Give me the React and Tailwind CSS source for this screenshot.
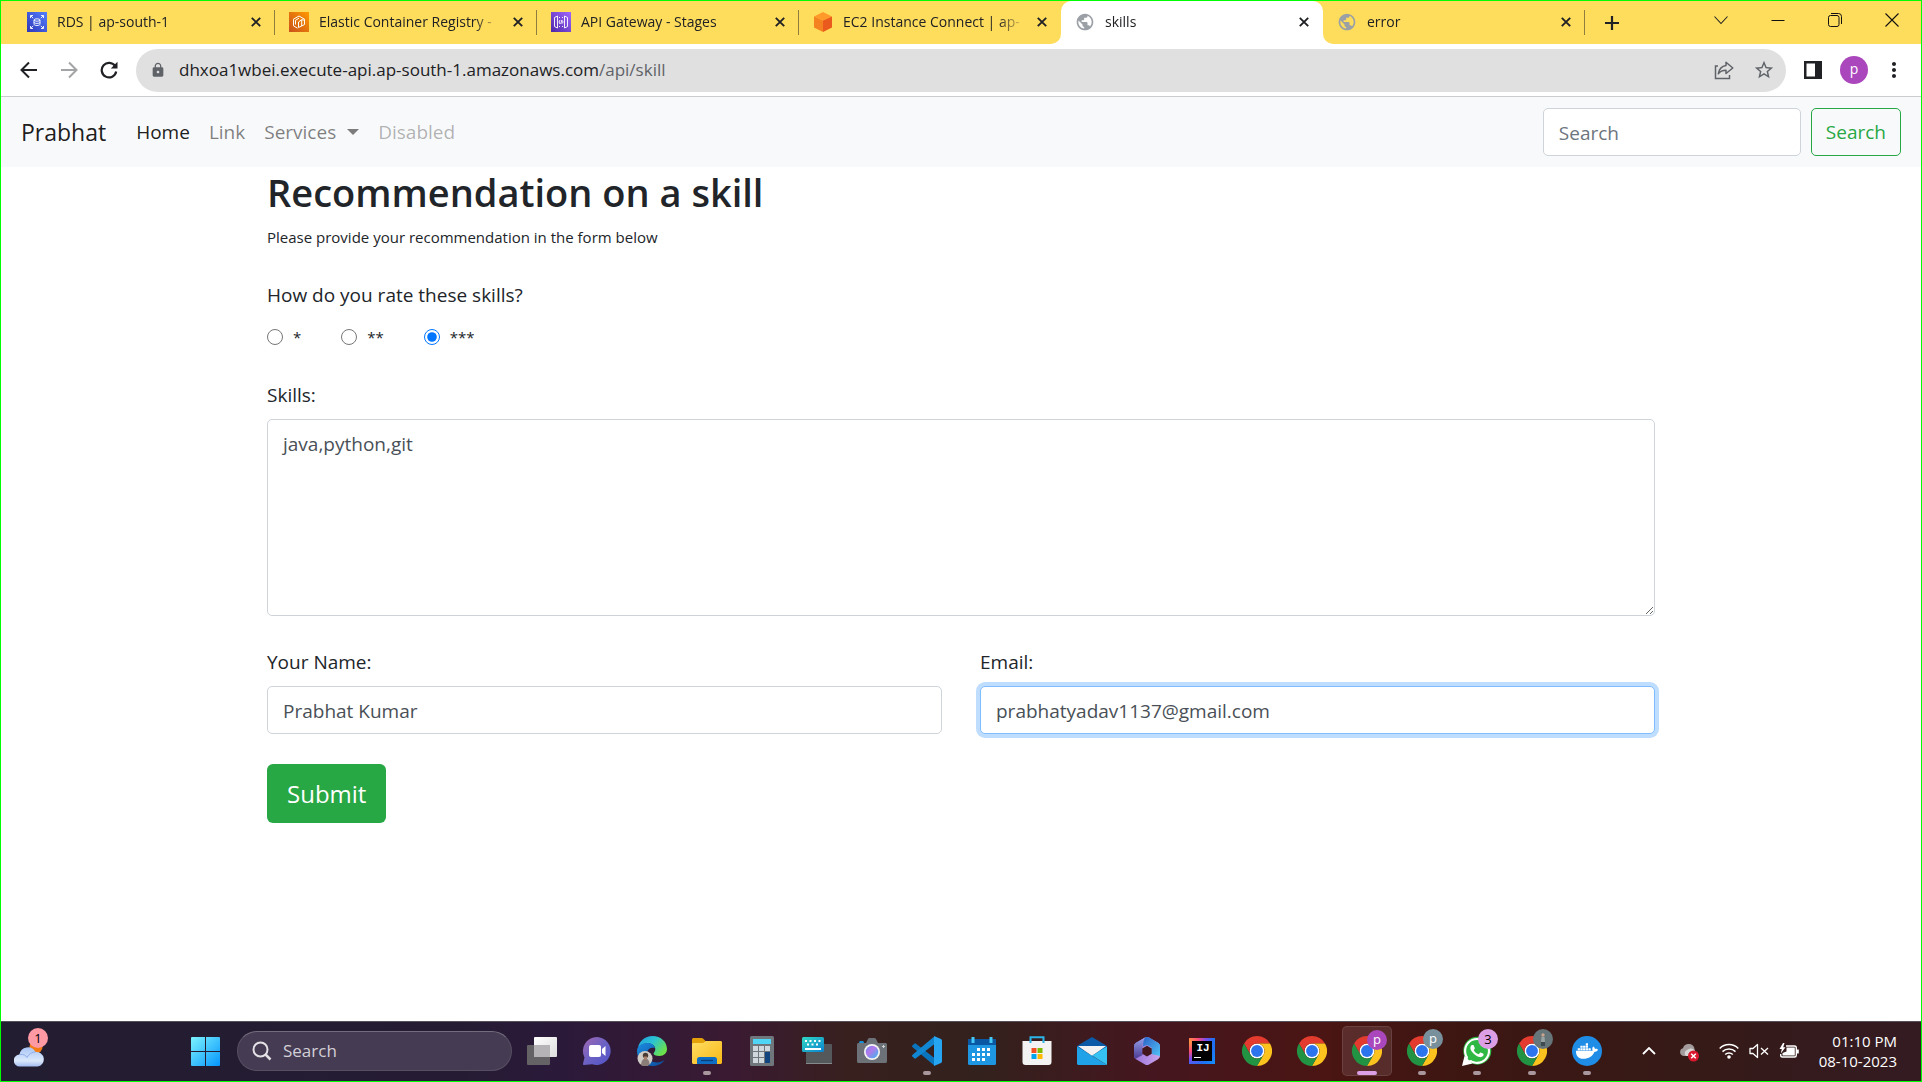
import React from "react";
import { FaDocker, FaWhatsapp } from "react-icons/fa";
import { MdLock, MdStarBorder, MdMoreVert, MdPublic } from "react-icons/md";

/* ---------- browser tab icons ---------- */

function RdsIcon() {
  return (
    <svg viewBox="0 0 20 20" className="size-5">
      <defs>
        <linearGradient id="rds" x1="0" y1="1" x2="1" y2="0">
          <stop offset="0" stopColor="#2e37b8" />
          <stop offset="1" stopColor="#527fff" />
        </linearGradient>
      </defs>
      <rect width="20" height="20" fill="url(#rds)" />
      <g fill="none" stroke="#fff" strokeWidth="0.9">
        <path d="M3.5 6V3.5H6M14 3.5h2.5V6M16.5 14v2.5H14M6 16.5H3.5V14M3.8 3.8l2.4 2.4M16.2 3.8l-2.4 2.4M3.8 16.2l2.4-2.4M16.2 16.2l-2.4-2.4" />
        <ellipse cx="10" cy="8" rx="3" ry="1.2" />
        <path d="M7 8v4.2c0 .7 1.300 1.300 3 1.300s3-.6 3-1.300V8M7 10.200c0 .7 1.300 1.200 3 1.200s3-.5 3-1.200" />
      </g>
    </svg>
  );
}

function EcrIcon() {
  return (
    <svg viewBox="0 0 20 20" className="size-5">
      <defs>
        <linearGradient id="ecr" x1="0" y1="1" x2="1" y2="0">
          <stop offset="0" stopColor="#c8511b" />
          <stop offset="1" stopColor="#ff9900" />
        </linearGradient>
      </defs>
      <rect width="20" height="20" fill="url(#ecr)" />
      <g fill="none" stroke="#fff" strokeWidth="1" strokeLinejoin="round">
        <path d="M8.500 16.200 4.500 13.800V7.200L10 4l5.500 3.200v1.500" />
        <path d="M9.500 15.500V10l3.200-2.300v6.300zM12.700 14l2.800-1.500V8.200l-2.800-.5M6.500 12.500V8.300L10 6.200" />
      </g>
    </svg>
  );
}

function GatewayIcon() {
  return (
    <svg viewBox="0 0 20 20" className="size-5">
      <defs>
        <linearGradient id="gateway" x1="0" y1="1" x2="1" y2="0">
          <stop offset="0" stopColor="#4d27a8" />
          <stop offset="1" stopColor="#a166ff" />
        </linearGradient>
      </defs>
      <rect width="20" height="20" fill="url(#gateway)" />
      <g fill="none" stroke="#fff" strokeWidth="0.9">
        <path d="M6.500 4 3.500 5.500v9l3 1.500zM13.500 4l3 1.500v9l-3 1.500zM8 5.500h1M11 5.500h1M8 14.500h1M11 14.500h1" />
        <path d="m9 8-1 2 1 2M10.800 8l-1 4M11.300 8.500l.8 1.500-.8 1.500" />
      </g>
    </svg>
  );
}

function CubeIcon() {
  return (
    <svg viewBox="0 0 20 20" className="size-5">
      <path d="M10 0 1 4.500 10 8.500l9-4z" fill="#ff9a2a" />
      <path d="M1 4.500v11l9 4.500V8.500z" fill="#f58220" />
      <path d="M19 4.500v11L10 20V8.500z" fill="#ea5a1c" />
    </svg>
  );
}

function Globe() {
  return <MdPublic className="size-5 text-[#9aa0a6]" />;
}

function CloseX() {
  return (
    <svg viewBox="0 0 10 10" className="size-2.5">
      <path d="m.8.800 8.400 8.400M9.200.800.8 9.200" stroke="#202124" strokeWidth="1.900" />
    </svg>
  );
}

const tabs = [
  { title: "RDS | ap-south-1", Icon: RdsIcon },
  { title: "Elastic Container Registry -", Icon: EcrIcon },
  { title: "API Gateway - Stages", Icon: GatewayIcon },
  { title: "EC2 Instance Connect | ap-", Icon: CubeIcon, last: true },
  { title: "skills", Icon: Globe, active: true },
  { title: "error", Icon: Globe },
];

function Tab({ title, Icon, active, last }) {
  return (
    <div
      className={
        "relative flex h-full min-w-0 basis-[262px] items-center pb-[2px] pl-[14px] pr-[14px] " +
        (active ? "rounded-t-[10px] bg-white" : "")
      }
    >
      <span className="shrink-0">
        <Icon />
      </span>
      <button
        type="button"
        className="ml-[10px] min-w-0 flex-1 overflow-hidden text-left text-[14px] leading-5 whitespace-nowrap text-[#202124] [mask-image:linear-gradient(to_right,black_85%,transparent)]"
      >
        {title}
      </button>
      <button type="button" aria-label={"Close " + title} className="ml-3 shrink-0">
        <CloseX />
      </button>
      {!active && !last && <span className="absolute top-[9px] right-0 h-[25px] w-px bg-[#8f7d3f]" />}
      {active && (
        <>
          <span className="absolute bottom-0 -left-[10px] size-[10px] bg-white">
            <span className="block size-full rounded-br-[10px] bg-[#ffdd5c]" />
          </span>
          <span className="absolute -right-[10px] bottom-0 size-[10px] bg-white">
            <span className="block size-full rounded-bl-[10px] bg-[#ffdd5c]" />
          </span>
        </>
      )}
    </div>
  );
}

function TabStrip() {
  return (
    <div className="flex h-[43px] items-center bg-[#ffdd5c] pr-px pl-3">
      <div className="flex h-full min-w-0 flex-1 items-center">
        {tabs.map((t) => (
          <Tab key={t.title} {...t} />
        ))}
        <button type="button" aria-label="New tab" className="ml-[19px] shrink-0">
          <svg viewBox="0 0 16 16" className="size-4">
            <path d="M8 1v14M1 8h14" stroke="#202124" strokeWidth="2.200" />
          </svg>
        </button>
      </div>
      <div className="flex shrink-0 pb-[6px]">
        <button type="button" aria-label="Search tabs" className="grid w-[57px] place-items-center">
          <svg viewBox="0 0 14 14" className="size-3.5">
            <path d="m.5 3.500 6.500 7 6.500-7" fill="none" stroke="#202124" strokeWidth="1.100" />
          </svg>
        </button>
        <button type="button" aria-label="Minimize" className="grid w-[57px] place-items-center">
          <svg viewBox="0 0 14 14" className="size-3.5">
            <path d="M.5 7.500h13" stroke="#111" />
          </svg>
        </button>
        <button type="button" aria-label="Restore" className="grid w-[57px] place-items-center">
          <svg viewBox="0 0 14 14" className="size-3.5" fill="none" stroke="#111">
            <rect x=".5" y="2.500" width="10.500" height="11" rx="2" />
            <path d="M3 .500h7.500a3 3 0 0 1 3 3V11" />
          </svg>
        </button>
        <button type="button" aria-label="Close window" className="grid w-[57px] place-items-center">
          <svg viewBox="0 0 14 14" className="size-3.5">
            <path d="m.5.500 13 13M13.500.500l-13 13" stroke="#111" strokeWidth="1.100" />
          </svg>
        </button>
      </div>
    </div>
  );
}

function Toolbar() {
  return (
    <div className="flex h-[53px] items-center border-b border-[#cbcccf] bg-white pr-[15px] pl-4">
      <button type="button" aria-label="Back" className="mr-4 grid size-6 place-items-center">
        <svg viewBox="0 0 18 18" className="size-[18px]" fill="none" stroke="#202124" strokeWidth="2">
          <path d="M17 9H2M9 1.500 1.500 9 9 16.500" />
        </svg>
      </button>
      <button type="button" aria-label="Forward" className="mr-4 grid size-6 place-items-center">
        <svg viewBox="0 0 18 18" className="size-[18px]" fill="none" stroke="#a3a4a6" strokeWidth="2">
          <path d="M1 9h15M9 1.500 16.500 9 9 16.500" />
        </svg>
      </button>
      <button type="button" aria-label="Reload" className="mr-[15px] grid size-6 place-items-center">
        <svg viewBox="0 0 18 18" className="size-[18px]" fill="none" stroke="#202124" strokeWidth="2.200">
          <path d="M15.200 5.200A7.300 7.300 0 1 0 16.200 10.500" />
          <path d="M17.500.800V7.500h-6.700z" fill="#202124" stroke="none" />
        </svg>
      </button>
      <div className="flex h-[43px] min-w-0 flex-1 items-center rounded-full bg-[#e0e0e0] pr-[11px] pl-[14px]">
        <MdLock className="size-4 shrink-0 text-[#5f6368]" />
        <div className="ml-[13px] min-w-0 flex-1 truncate text-[17px] leading-6 text-[#202124]">
          dhxoa1wbei.execute-api.ap-south-1.amazonaws.com<span className="text-[#5f6368]">/api/skill</span>
        </div>
        <button type="button" aria-label="Share" className="mr-[19px]">
          <svg viewBox="0 0 20 20" className="size-5" fill="none" stroke="#5f6368" strokeWidth="1.500">
            <path d="M4 6H1.500v12.500h14V15" />
            <path d="M12 2.200 18.800 8 12 13.500v-3.300c-3.500 0-5.800 1-7.700 3.600C5 9.500 7.500 6.200 12 5.500z" strokeLinejoin="round" />
          </svg>
        </button>
        <button type="button" aria-label="Bookmark">
          <MdStarBorder className="size-[22px] text-[#5f6368]" />
        </button>
      </div>
      <button type="button" aria-label="Side panel" className="ml-[18px]">
        <svg viewBox="0 0 18 18" className="size-[18px]">
          <path d="M0 0h18v18H0zM2.500 2.500v13h8.500v-13z" fillRule="evenodd" fill="#202124" />
        </svg>
      </button>
      <button
        type="button"
        className="ml-[18px] grid size-7 place-items-center rounded-full bg-[#ab47bc] pb-[2px] text-[14px] leading-5 text-white"
      >
        p
      </button>
      <button type="button" aria-label="Menu" className="ml-[14px]">
        <MdMoreVert className="size-6 text-[#202124]" />
      </button>
    </div>
  );
}

/* ---------- web page ---------- */

function Navbar() {
  return (
    <nav className="flex h-[70px] items-center bg-[#f8f9fa] px-5 text-[19px] leading-7 whitespace-nowrap">
      <a href="#" className="text-[23px] leading-9 text-black/90">Prabhat</a>
      <div className="ml-[30px] flex flex-1 items-center gap-[19px]">
        <a href="#" className="text-black/90">Home</a>
        <a href="#" className="text-black/50">Link</a>
        <a href="#" className="flex items-center text-black/50">
          Services
          <svg viewBox="0 0 12 6" className="ml-[11px] h-[6px] w-3">
            <path d="M0 0h12L6 6z" fill="currentColor" />
          </svg>
        </a>
        <span className="text-black/30">Disabled</span>
      </div>
      <input
        type="search"
        placeholder="Search"
        aria-label="Search"
        className="h-12 w-[258px] rounded-[5px] border border-[#ced4da] bg-white px-[15px] pt-[2px] text-[#495057] placeholder:text-[#6c757d]"
      />
      <button type="button" className="ml-[10px] h-12 rounded-[5px] border border-[#28a745] px-[14px] text-[#28a745]">
        Search
      </button>
    </nav>
  );
}

const field = "w-full rounded-[5px] border bg-white px-[15px] text-[#495057] outline-none ";

function SkillForm() {
  return (
    <main className="mx-auto w-full max-w-[1388px] text-[19px] leading-[30px] text-[#212529]">
      <h1 className="text-[38px] leading-[50px] font-semibold">Recommendation on a skill</h1>
      <p className="mt-[5px] text-[15px] leading-[30px]">Please provide your recommendation in the form below</p>
      <form onSubmit={(e) => e.preventDefault()}>
        <fieldset className="mt-7">
          <legend>How do you rate these skills?</legend>
          <div className="mt-3 flex gap-10">
            {["*", "**", "***"].map((s) => (
              <label key={s} className="flex items-center gap-[10px] text-[15px]">
                <input
                  type="radio"
                  name="rating"
                  value={s}
                  defaultChecked={s === "***"}
                  className="size-4 accent-[#0075ff]"
                />
                {s}
              </label>
            ))}
          </div>
        </fieldset>
        <label htmlFor="skills" className="mt-7 block">Skills:</label>
        <textarea
          id="skills"
          defaultValue="java,python,git"
          className={field + "mt-[9px] block h-[197px] border-[#ced4da] py-[9px]"}
        />
        <div className="mt-[31px] grid grid-cols-2 gap-[38px]">
          <div>
            <label htmlFor="name" className="block">Your Name:</label>
            <input
              id="name"
              type="text"
              defaultValue="Prabhat Kumar"
              className={field + "mt-[9px] block h-12 border-[#ced4da] pt-[2px]"}
            />
          </div>
          <div>
            <label htmlFor="email" className="block">Email:</label>
            <input
              id="email"
              type="email"
              defaultValue="prabhatyadav1137@gmail.com"
              className={field + "mt-[9px] block h-12 border-[#80bdff] pt-[2px] shadow-[0_0_0_4px_rgba(0,123,255,0.25)]"}
            />
          </div>
        </div>
        <button type="submit" className="mt-[30px] h-[59px] rounded-md bg-[#28a745] px-5 text-[24px] text-white">
          Submit
        </button>
      </form>
    </main>
  );
}

/* ---------- taskbar icons ---------- */

function Chrome() {
  return (
    <svg viewBox="0 0 48 48" className="size-[30px]">
      <circle cx="24" cy="24" r="12" fill="#fff" />
      <path d="M24,12H44.7812a23.9939,23.9939,0,0,0-41.5639.0029L13.6079,30l.0093-.0024A11.9852,11.9852,0,0,1,24,12Z" fill="#e33b2e" />
      <path d="M34.3913,30.0029,24.0007,48A23.994,23.994,0,0,0,44.78,12.0031H23.9989l-.0025.0093A11.985,11.985,0,0,1,34.3913,30.0029Z" fill="#fcc31e" />
      <path d="M13.6086,30.0031,3.218,12.006A23.994,23.994,0,0,0,24.0025,48L34.3931,30.0029l-.0067-.0068a11.9852,11.9852,0,0,1-20.7778.007Z" fill="#229342" />
      <circle cx="24" cy="24" r="9.500" fill="#2b74ee" />
    </svg>
  );
}

function TaskView() {
  return (
    <svg viewBox="0 0 30 28" className="h-7 w-[30px]">
      <defs>
        <linearGradient id="tv" x1="0" y1="0" x2="1" y2="1">
          <stop offset="0" stopColor="#fff" />
          <stop offset="1" stopColor="#ddd" />
        </linearGradient>
      </defs>
      <rect y="8" width="23" height="20" rx="1" fill="#646264" />
      <rect x="7" width="23" height="20" rx="1" fill="url(#tv)" />
      <rect x="7" y="8" width="16" height="12" fill="#b5b3b5" />
    </svg>
  );
}

function Chat() {
  return (
    <svg viewBox="0 0 30 30" className="size-[30px]">
      <defs>
        <linearGradient id="chat" x1="0" y1="0" x2="1" y2="1">
          <stop offset="0" stopColor="#a267b0" />
          <stop offset=".5" stopColor="#6c62c4" />
          <stop offset="1" stopColor="#4f52c9" />
        </linearGradient>
      </defs>
      <path d="M15 1a14 14 0 1 1-5 27.200L2 29c-.8.1-1.300-.6-1-1.300L2.500 21.500A14 14 0 0 1 15 1z" fill="url(#chat)" />
      <rect x="7" y="9" width="12" height="12" rx="2" fill="#fff" />
      <path d="m20 13 3.500-3v10L20 17z" fill="#fff" />
    </svg>
  );
}

function Edge() {
  return (
    <svg viewBox="0 0 30 30" className="size-[30px]">
      <defs>
        <linearGradient id="edgeA" x1="0" y1="0" x2="1" y2=".6">
          <stop offset="0" stopColor="#1f9be0" />
          <stop offset=".5" stopColor="#2bc3d2" />
          <stop offset="1" stopColor="#6be04a" />
        </linearGradient>
        <linearGradient id="edgeB" x1="0" y1="0" x2="1" y2="1">
          <stop offset="0" stopColor="#1b8be0" />
          <stop offset="1" stopColor="#0c4a9a" />
        </linearGradient>
      </defs>
      <path d="M1 12C2 5 8 0 15.500 0 24 0 30 6 30 13c0 4-3 7-7.500 7-4 0-6-1.200-6-2.500 0-.8 1.800-1.500 1.800-4.500 0-3-3-5.500-7.300-5.500C6 7.500 2.500 9.500 1 12z" fill="url(#edgeA)" />
      <path d="M0 15c0-5 5-8 10.500-8 4 0 7 2 7.500 5-5-1.500-8.500 2-8 6.500.5 5 6 9 12 7.800 2.500-.4 4.500-1.500 5.800-2.800C25.500 27.500 21 30 15.500 30 7 30 0 23.500 0 15z" fill="url(#edgeB)" />
      <circle cx="8" cy="22.500" r="7.500" fill="#cfcac6" />
      <circle cx="8.500" cy="19.500" r="2.700" fill="#4a3a34" />
      <path d="M4 29c.5-4.500 2-6.500 4.500-6.500S12.500 25 12.500 28.500A7.500 7.500 0 0 1 4 29z" fill="#8a7d78" />
      <path d="M7 20.500h3v2L8.500 24 7 22.500z" fill="#a77f68" />
    </svg>
  );
}

function Folder() {
  return (
    <svg viewBox="0 0 30 26" className="h-[26px] w-[30px]">
      <defs>
        <linearGradient id="fold" x1="0" y1="0" x2="1" y2="1">
          <stop offset="0" stopColor="#ffdd63" />
          <stop offset="1" stopColor="#f9b916" />
        </linearGradient>
      </defs>
      <path d="M0 1.500C0 .700.700 0 1.500 0h8c.6 0 1 .2 1.500.600L13.500 3H28c1 0 2 1 2 2v5H0z" fill="#e3a008" />
      <path d="M0 6.500c0-.8.5-1.500 1.500-1.500H11l3-2h14.500c.8 0 1.500.6 1.500 1.500V24.500c0 .8-.7 1.500-1.500 1.500h-27C.700 26 0 25.300 0 24.500z" fill="url(#fold)" />
      <path d="M5 26v-4.500C5 20 6 19 7.500 19h15c1.500 0 2.500 1 2.500 2.500V26z" fill="#0f6fc5" />
      <path d="M9 22.500h12" stroke="#0b3f7c" strokeWidth="1.300" />
    </svg>
  );
}

function Calculator() {
  return (
    <svg viewBox="0 0 24 30" className="h-[30px] w-6">
      <rect width="24" height="30" rx="1.500" fill="#6f767c" />
      <rect x="3" y="3" width="18" height="5" fill="#4fd6f7" />
      {[10, 16, 22].map((y) =>
        [3, 9, 15].map((x) =>
          x === 15 && y > 10 ? null : <rect key={x + "-" + y} x={x} y={y} width="5" height="5" fill="#cfd8dd" />
        )
      )}
      <rect x="15" y="16" width="5" height="11" fill="#11457f" />
    </svg>
  );
}

function Keyboard() {
  return (
    <svg viewBox="0 0 30 28" className="h-7 w-[30px]">
      <defs>
        <linearGradient id="kb" x1="0" y1="0" x2="1" y2="1">
          <stop offset="0" stopColor="#2fd9c4" />
          <stop offset="1" stopColor="#0b82d0" />
        </linearGradient>
      </defs>
      <rect x="4" y="7" width="26" height="20" rx="1" fill="#55585b" />
      <path d="M4 26.500h26" stroke="#85898c" />
      <rect width="22" height="15" rx="1.500" fill="url(#kb)" />
      <path d="M3 4h16M5 7.500h12" stroke="#fff" strokeWidth="1.800" strokeDasharray="2 2.500" />
      <path d="M3 12h16" stroke="#fff" strokeWidth="2" />
    </svg>
  );
}

function Camera() {
  return (
    <svg viewBox="0 0 30 26" className="h-[26px] w-[30px]">
      <defs>
        <linearGradient id="cam" x1="0" y1="0" x2="1" y2="1">
          <stop offset="0" stopColor="#6f8cf0" />
          <stop offset=".4" stopColor="#b478ea" />
          <stop offset="1" stopColor="#35b8ee" />
        </linearGradient>
      </defs>
      <rect x="2" y="3" width="5" height="4" rx="1.500" fill="#1593dc" />
      <path d="M1.500 5H9l2-4c.4-.7.800-1 1.500-1h5c.7 0 1.100.3 1.500 1l2 4h7.500c.8 0 1.500.6 1.500 1.500v17c0 .8-.7 1.500-1.500 1.500h-27C.700 25 0 24.300 0 23.500v-17C0 5.600.700 5 1.500 5z" fill="#6c7277" />
      <circle cx="15" cy="14" r="8" fill="#f4f4f4" />
      <circle cx="15" cy="14" r="6.300" fill="url(#cam)" />
      <path d="M26.500 7v3M25 8.500h3" stroke="#cfd3d6" />
    </svg>
  );
}

function VsCode() {
  return (
    <svg viewBox="0 0 30 30" className="size-[30px]">
      <path d="M.6 11.300a1.300 1.300 0 0 1 0-2L2.300 7.700a1.300 1.300 0 0 1 1.700 0L22.500 22v6.500c-.8.500-1 .5-1.500 0z" fill="#0a74bd" />
      <path d="M.6 18.700a1.300 1.300 0 0 0 0 2l1.700 1.600a1.300 1.300 0 0 0 1.700 0L22.500 8V1.500c-.8-.5-1-.5-1.500 0z" fill="#1187d3" />
      <path d="M22 0v30l7-3c.6-.3 1-.9 1-1.500v-21c0-.6-.4-1.200-1-1.500z" fill="#25a5f2" />
    </svg>
  );
}

function Calendar() {
  return (
    <svg viewBox="0 0 28 28" className="size-7">
      <rect y="2" width="28" height="26" rx="1.500" fill="#1e96e2" />
      <path d="M0 3.500C0 2.500.700 2 1.500 2h25c.8 0 1.500.5 1.500 1.500V8H0z" fill="#0a58a4" />
      <path d="M5 0v6M23 0v6" stroke="#45c9f7" strokeWidth="3" />
      <path d="M9 12.500h13M4 17.500h18M4 22.500h13" stroke="#fff" strokeWidth="3" strokeDasharray="3 2" />
    </svg>
  );
}

function Store() {
  return (
    <svg viewBox="0 0 30 30" className="size-[30px]">
      <path d="M8.500 7V1.200h13V7" fill="none" stroke="#2bb4e8" strokeWidth="2" />
      <path d="M.5 5h29v21a3 3 0 0 1-3 3h-23a3 3 0 0 1-3-3z" fill="#f3f3f3" />
      <path d="M8.500 5v2M21.500 5v2" stroke="#2bb4e8" strokeWidth="2" />
      <path d="M9.500 12h5v5h-5z" fill="#f25022" />
      <path d="M15.500 12h5v5h-5z" fill="#7fba00" />
      <path d="M9.500 18h5v5h-5z" fill="#00a4ef" />
      <path d="M15.500 18h5v5h-5z" fill="#ffb900" />
    </svg>
  );
}

function Mail() {
  return (
    <svg viewBox="0 0 30 28" className="h-7 w-[30px]">
      <path d="M0 9 15 0l15 9v6H0z" fill="#0a5aa8" />
      <path d="M1 9h28L15 19z" fill="#f2f2f2" />
      <path d="M0 9.500 30 28H1.500C.700 28 0 27.300 0 26.500z" fill="#1fa2e8" />
      <path d="M30 9.500 15 18.500 30 28z" fill="#35c1f1" />
    </svg>
  );
}

function M365() {
  return (
    <svg viewBox="0 0 28 30" className="h-[30px] w-7">
      <defs>
        <linearGradient id="mA" x1="0" y1="0" x2="0" y2="1">
          <stop offset="0" stopColor="#95a4ee" />
          <stop offset="1" stopColor="#4b3a92" />
        </linearGradient>
        <linearGradient id="mB" x1="0" y1="0" x2="1" y2="1">
          <stop offset="0" stopColor="#2a62c8" />
          <stop offset="1" stopColor="#52c1f5" />
        </linearGradient>
        <linearGradient id="mC" x1="0" y1="0" x2="1" y2="0">
          <stop offset="0" stopColor="#9a72d8" />
          <stop offset="1" stopColor="#c9a6ec" />
        </linearGradient>
      </defs>
      <path
        d="M12 1.500 3 6.800C1.800 7.500 1 8.800 1 10.200v9.600c0 1.400.8 2.700 2 3.400l9 5.300c1.200.7 2.800.7 4 0l9-5.300c1.200-.7 2-2 2-3.400v-9.600c0-1.400-.8-2.700-2-3.400l-9-5.300c-1.200-.7-2.800-.7-4 0z"
        fill="url(#mC)"
      />
      <path d="M12.500 1.200 3 6.800C1.800 7.500 1 8.800 1 10.200v9.600c0 1.200.5 2.300 1.500 3L9.500 19v-8c0-4 1.200-7.500 3-9.800z" fill="url(#mA)" />
      <path d="M12.500 1.200C10.700 3 10 6 10 10.500l4-1.500 4.500 2.500V18l8.500 2v-9.800c0-1.400-.8-2.700-2-3.400l-9-5.300c-1-.6-2.400-.7-3.500-.3z" fill="url(#mB)" />
      <path d="m14 9.800 4.700 2.700v5.300L14 20.500l-4.700-2.700v-5.300z" fill="#43161d" />
    </svg>
  );
}

function IntelliJ() {
  return (
    <span className="grid size-[26px] place-items-center bg-[radial-gradient(circle_at_0%_15%,#ff9a3c_0%,#fb4a7a_28%,#7a4df0_50%,#1f6ff2_72%,#1292fb_100%)]">
      <span className="flex size-5 flex-col bg-black pl-[2px] pt-px font-['Liberation_Mono'] text-[11px] leading-3 font-bold text-white">
        IJ
        <span className="mt-[3px] h-px w-[7px] bg-white" />
      </span>
    </span>
  );
}

function WhatsApp() {
  return (
    <svg viewBox="0 0 30 30" className="size-[30px]">
      <circle cx="15.300" cy="14.700" r="14" fill="#2fb944" />
      <path d="M0 30 2.500 20l8 7.500z" fill="#fff" />
      <FaWhatsapp size={30} color="#fff" />
    </svg>
  );
}

function Docker() {
  return (
    <span className="grid size-[30px] place-items-center rounded-full bg-[#1f8ce6]">
      <FaDocker className="size-[22px] text-white" />
    </span>
  );
}

const apps = [
  { name: "Task view", Icon: TaskView },
  { name: "Chat", Icon: Chat },
  { name: "Edge", Icon: Edge },
  { name: "File Explorer", Icon: Folder, open: true },
  { name: "Calculator", Icon: Calculator },
  { name: "Keyboard", Icon: Keyboard },
  { name: "Camera", Icon: Camera },
  { name: "Visual Studio Code", Icon: VsCode, open: true },
  { name: "Calendar", Icon: Calendar },
  { name: "Store", Icon: Store },
  { name: "Mail", Icon: Mail },
  { name: "Microsoft 365", Icon: M365 },
  { name: "IntelliJ IDEA", Icon: IntelliJ },
  { name: "Chrome", Icon: Chrome },
  { name: "Chrome 2", Icon: Chrome },
  { name: "Chrome 3", Icon: Chrome, active: true, badge: "p", tone: "bg-[#ab47bc] text-white" },
  { name: "Chrome 4", Icon: Chrome, open: true, badge: "p", tone: "bg-[#78909c] text-white" },
  { name: "WhatsApp", Icon: WhatsApp, open: true, badge: "3", tone: "bg-[#dc9ee4] text-black" },
  { name: "Chrome 5", Icon: Chrome, open: true, photo: true, tone: "bg-[#66757a]" },
  { name: "Docker", Icon: Docker, open: true },
];

function AppButton({ name, Icon, open, active, badge, photo, tone }) {
  return (
    <button
      type="button"
      aria-label={name}
      className={
        "relative grid size-[50px] shrink-0 place-items-center rounded-[5px] " +
        (active ? "border border-white/10 bg-white/10" : "")
      }
    >
      <Icon />
      {(badge || photo) && (
        <span
          className={
            "absolute top-[3px] right-[4px] grid size-5 place-items-center rounded-full text-[13px] leading-4 " +
            (badge === "p" ? "pb-[2px] " : "") +
            tone
          }
        >
          {badge}
          {photo && (
            <svg viewBox="0 0 20 20" className="size-5">
              <circle cx="10" cy="6" r="1.700" fill="#c9a48c" />
              <path d="M8.500 8h3l.5 5H8z" fill="#98a2a2" />
              <path d="M8 13h4v4H8z" fill="#3d4a50" />
            </svg>
          )}
        </span>
      )}
      {open && <span className="absolute bottom-px left-[21px] h-1 w-2 rounded-full bg-[#a8979d]" />}
      {active && <span className="absolute bottom-0 left-[14px] h-1 w-5 rounded-full bg-[#dc9ee4]" />}
    </button>
  );
}

function WeatherIcon() {
  return (
    <svg viewBox="0 0 30 24" className="h-6 w-[30px]">
      <defs>
        <linearGradient id="cloud" x1="0" y1="0" x2="0" y2="1">
          <stop offset="0" stopColor="#a9c5f5" />
          <stop offset=".7" stopColor="#dbe8fb" />
          <stop offset="1" stopColor="#a3bcf0" />
        </linearGradient>
      </defs>
      <circle cx="22" cy="4" r="6.500" fill="#f57c14" />
      <path d="M6 23.500a6 6 0 0 1-.5-12A8.500 8.500 0 0 1 21.500 9 7.300 7.300 0 0 1 23.500 23.500z" fill="url(#cloud)" />
      <path d="M5.500 11.500c4-.6 6.500 1 7.500 3 1.500-3.500 5-5.500 8.500-5.500" fill="none" stroke="#8fb0ea" />
    </svg>
  );
}

function Taskbar() {
  return (
    <footer className="mt-auto flex h-[60px] items-center border-t border-[#55505a] bg-[linear-gradient(90deg,#231d31_0%,#251c33_24%,#2b193a_29%,#3a1a32_38%,#38201f_44%,#33211d_51%,#45161f_60%,#4a1513_69%,#3d1612_76%,#351a17_88%,#341b22_100%)] pr-6 pb-px text-white">
      <button type="button" aria-label="Weather" className="relative ml-[13px] mt-2 shrink-0">
        <WeatherIcon />
        <span className="absolute -top-[15px] left-[14px] grid size-5 place-items-center rounded-full bg-[#ff99a4] text-[13px] leading-4 text-black">
          1
        </span>
      </button>
      <div className="ml-auto flex items-center">
        <button type="button" aria-label="Start" className="mr-[17px] shrink-0">
          <svg viewBox="0 0 29 29" className="size-[29px]">
            <defs>
              <linearGradient id="win" x1="0" y1="0" x2="29" y2="29" gradientUnits="userSpaceOnUse">
                <stop offset="0" stopColor="#7cf3ff" />
                <stop offset="1" stopColor="#0595fc" />
              </linearGradient>
            </defs>
            <path d="M0 1a1 1 0 0 1 1-1h13v14H0zM15 0h13a1 1 0 0 1 1 1v13H15zM0 15h14v14H1a1 1 0 0 1-1-1zM15 15h14v13a1 1 0 0 1-1 1H15z" fill="url(#win)" />
          </svg>
        </button>
        <label className="flex h-10 w-[275px] items-center rounded-full border border-white/10 border-t-white/25 bg-[#453b52] pl-[14px]">
          <svg viewBox="0 0 20 20" className="size-5 shrink-0" fill="none" stroke="#e3e0e6" strokeWidth="2">
            <circle cx="8.500" cy="8.500" r="7" />
            <path d="m13.500 13.500 5 5" strokeWidth="2.500" />
          </svg>
          <input
            type="text"
            placeholder="Search"
            aria-label="Taskbar search"
            className="ml-[11px] w-full min-w-0 bg-transparent text-[17px] outline-none placeholder:text-[#d3cfd7]"
          />
        </label>
        <div className="ml-[5px] flex gap-[5px]">
          {apps.map((a) => (
            <AppButton key={a.name} {...a} />
          ))}
        </div>
        <button type="button" aria-label="Hidden icons" className="ml-[30px]">
          <svg viewBox="0 0 14 8" className="h-2 w-3.5">
            <path d="m1 7 6-6 6 6" fill="none" stroke="#fff" strokeWidth="1.800" />
          </svg>
        </button>
        <button type="button" aria-label="OneDrive" className="ml-[23px]">
          <svg viewBox="0 0 20 18" className="mt-1 h-[18px] w-5">
            <path d="M4.500 12A4 4 0 0 1 4 4.200 6 6 0 0 1 15 3l1 4-6 5z" fill="#a39b9c" />
            <path d="M7 12a3.500 3.500 0 0 1 1-6 5 5 0 0 1 8 1v5z" fill="#d9d6d6" />
            <circle cx="14.500" cy="12" r="5.500" fill="#d9182d" />
            <path d="m12.200 9.700 4.600 4.600M16.800 9.700l-4.600 4.600" stroke="#fff" strokeWidth="1.500" />
          </svg>
        </button>
        <button type="button" aria-label="Network, sound and battery" className="ml-5 flex items-center gap-[10px]">
          <svg viewBox="0 0 20 16" className="h-4 w-5" fill="none" stroke="#fff" strokeWidth="1.500">
            <path d="M.7 5.500a13 13 0 0 1 18.600 0M3.500 8.600a9.200 9.200 0 0 1 13 0M6.200 11.500a5.400 5.400 0 0 1 7.600 0" />
            <circle cx="10" cy="14" r="1.800" fill="#fff" stroke="none" />
          </svg>
          <svg viewBox="0 0 20 16" className="h-4 w-5" fill="none" stroke="#fff" strokeWidth="1.300">
            <path d="M1 5.500h3L8.500 1.500v13L4 10.500H1z" strokeLinejoin="round" />
            <path d="m12 5 7 6.500M19 5l-7 6.500" />
          </svg>
          <svg viewBox="0 0 20 16" className="h-4 w-5" fill="none" stroke="#fff" strokeWidth="1.400">
            <path d="M7 3h8.500A1.800 1.800 0 0 1 17.300 4.800v7.400A1.800 1.800 0 0 1 15.500 14h-12a1.800 1.800 0 0 1-1.800-1.800V11" />
            <path d="M7.500 4.500h8.300v8H3.500V10l4-1.500zM18 6.500h1.800v4H18z" fill="#fff" stroke="none" />
            <path d="M4 0 .500 6h2.300L1.800 10.500 6.500 4.200H4.200L5.500 0z" fill="#fff" stroke="none" />
          </svg>
        </button>
        <div className="w-[98px] text-right text-[15px] leading-5 whitespace-nowrap">
          <div>01:10 PM</div>
          <div>08-10-2023</div>
        </div>
      </div>
    </footer>
  );
}

export default function App() {
  return (
    <div className="flex min-h-screen flex-col border border-[#00ff00] bg-white font-['Open_Sans','Noto_Sans',sans-serif]">
      <TabStrip />
      <Toolbar />
      <Navbar />
      <SkillForm />
      <Taskbar />
    </div>
  );
}
